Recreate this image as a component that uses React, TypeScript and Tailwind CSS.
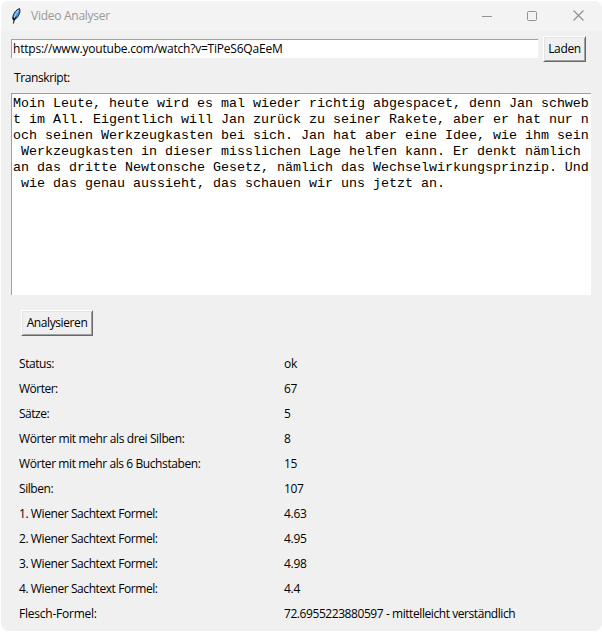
import React from "react";

const transcript = [
  "Moin Leute, heute wird es mal wieder richtig abgespacet, denn Jan schweb",
  "t im All. Eigentlich will Jan zurück zu seiner Rakete, aber er hat nur n",
  "och seinen Werkzeugkasten bei sich. Jan hat aber eine Idee, wie ihm sein",
  " Werkzeugkasten in dieser misslichen Lage helfen kann. Er denkt nämlich ",
  "an das dritte Newtonsche Gesetz, nämlich das Wechselwirkungsprinzip. Und",
  " wie das genau aussieht, das schauen wir uns jetzt an.",
];

const results = [
  { label: "Status:", value: "ok", tracking: "tracking-[-0.45px]" },
  { label: "Wörter:", value: "67", tracking: "tracking-[-0.5px]" },
  { label: "Sätze:", value: "5", tracking: "tracking-[-0.5px]" },
  { label: "Wörter mit mehr als drei Silben:", value: "8", tracking: "tracking-[-0.39px]" },
  { label: "Wörter mit mehr als 6 Buchstaben:", value: "15", tracking: "tracking-[-0.41px]" },
  { label: "Silben:", value: "107", tracking: "tracking-[-0.45px]" },
  { label: "1. Wiener Sachtext Formel:", value: "4.63", tracking: "tracking-[-0.42px]" },
  { label: "2. Wiener Sachtext Formel:", value: "4.95", tracking: "tracking-[-0.42px]" },
  { label: "3. Wiener Sachtext Formel:", value: "4.98", tracking: "tracking-[-0.42px]" },
  { label: "4. Wiener Sachtext Formel:", value: "4.4", tracking: "tracking-[-0.42px]" },
  { label: "Flesch-Formel:", value: "72.6955223880597 - mittelleicht verständlich", tracking: "tracking-[-0.23px]" },
];

function Feather() {
  return (
    <svg width="10" height="16" viewBox="0 0 10 16" className="shrink-0">
      <path d="M8.6 .6C5.5 1.4 2.2 5 1.7 9.8L2.5 12.2C6 11 8 7.5 9 3.5Z" fill="#4b91dc" stroke="#15191f" strokeWidth="0.9" />
      <path d="M7.6 2.2C5.4 4.2 3.8 7 3.1 9.8" fill="none" stroke="#9bc9f5" strokeWidth="1.4" />
      <path d="M5.2 8.5C4.2 10 3.1 11.5 2.4 15.5" fill="none" stroke="#111" strokeWidth="1" />
      <path d="M1.7 8.8L1.9 12.4L4.3 10.8" fill="#111" />
    </svg>
  );
}

function TkButton({ className, children }: { className: string; children: React.ReactNode }) {
  return (
    <button
      className={`h-[26px] shrink-0 border border-t-white border-l-white border-r-[#696969] border-b-[#696969] bg-[#f0f0f0] text-center whitespace-nowrap shadow-[inset_1px_1px_0_#e3e3e3,inset_-1px_-1px_0_#a0a0a0] ${className}`}
    >
      {children}
    </button>
  );
}

export default function App() {
  return (
    <div className="h-[632px] w-[602px] overflow-hidden bg-white pt-px pl-px font-['Open_Sans','Noto_Sans',sans-serif] text-[12px] leading-[16px] text-black">
      <div className="flex h-[630px] w-[601px] flex-col overflow-hidden rounded-[8px] bg-[#f0f0f0]">
        <header className="flex h-[30px] shrink-0 items-center bg-[#f3f3f3] pl-[10px] text-[#999999]">
          <Feather />
          <span className="ml-[10px] tracking-[-0.27px]">Video Analyser</span>
          <svg width="104" height="12" viewBox="0 0 104 12" className="mr-[16px] ml-auto" fill="none" stroke="#919191">
            <path d="M0 6.5H10" />
            <rect x="45.5" y="1.5" width="9" height="9" rx="1" />
            <path d="M91.5 .5L101.5 10.5M101.5 .5L91.5 10.5" strokeWidth="1.2" />
          </svg>
        </header>

        <div className="flex shrink-0 items-start pt-[5px] pl-[10px]">
          <div className="mt-[3px] h-[19px] w-[527px] border-t border-l border-[#a0a0a0] bg-white pl-px leading-[18px] whitespace-nowrap">
            <span className="tracking-[-0.21px]">https://www.youtube.com/watch?v=TiPeS6QaEeM</span>
          </div>
          <TkButton className="ml-[5px] w-[43px] tracking-[-0.35px]">Laden</TkButton>
        </div>

        <div className="mt-[8px] ml-[13px] h-[23px] shrink-0 tracking-[-0.4px]">Transkript:</div>

        <div className="ml-[10px] h-[202px] w-[580px] shrink-0 border-t border-l border-[#a0a0a0] bg-white pt-[2px] pl-px font-['Liberation_Mono',monospace] text-[13.333px] leading-[16px] whitespace-pre">
          {transcript.map((line) => (
            <div key={line}>{line}</div>
          ))}
        </div>

        <TkButton className="mt-[15px] ml-[20px] w-[72px] tracking-[-0.4px]">Analysieren</TkButton>

        <div className="mt-[15px] ml-[18px] flex flex-col">
          {results.map((row) => (
            <div key={row.label} className="grid h-[25px] grid-cols-[265px_1fr] items-center whitespace-nowrap">
              <div><span className={row.tracking}>{row.label}</span></div>
              <div><span className={row.value.length > 10 ? "tracking-[-0.43px]" : "tracking-[-0.3px]"}>{row.value}</span></div>
            </div>
          ))}
        </div>
      </div>
    </div>
  );
}
